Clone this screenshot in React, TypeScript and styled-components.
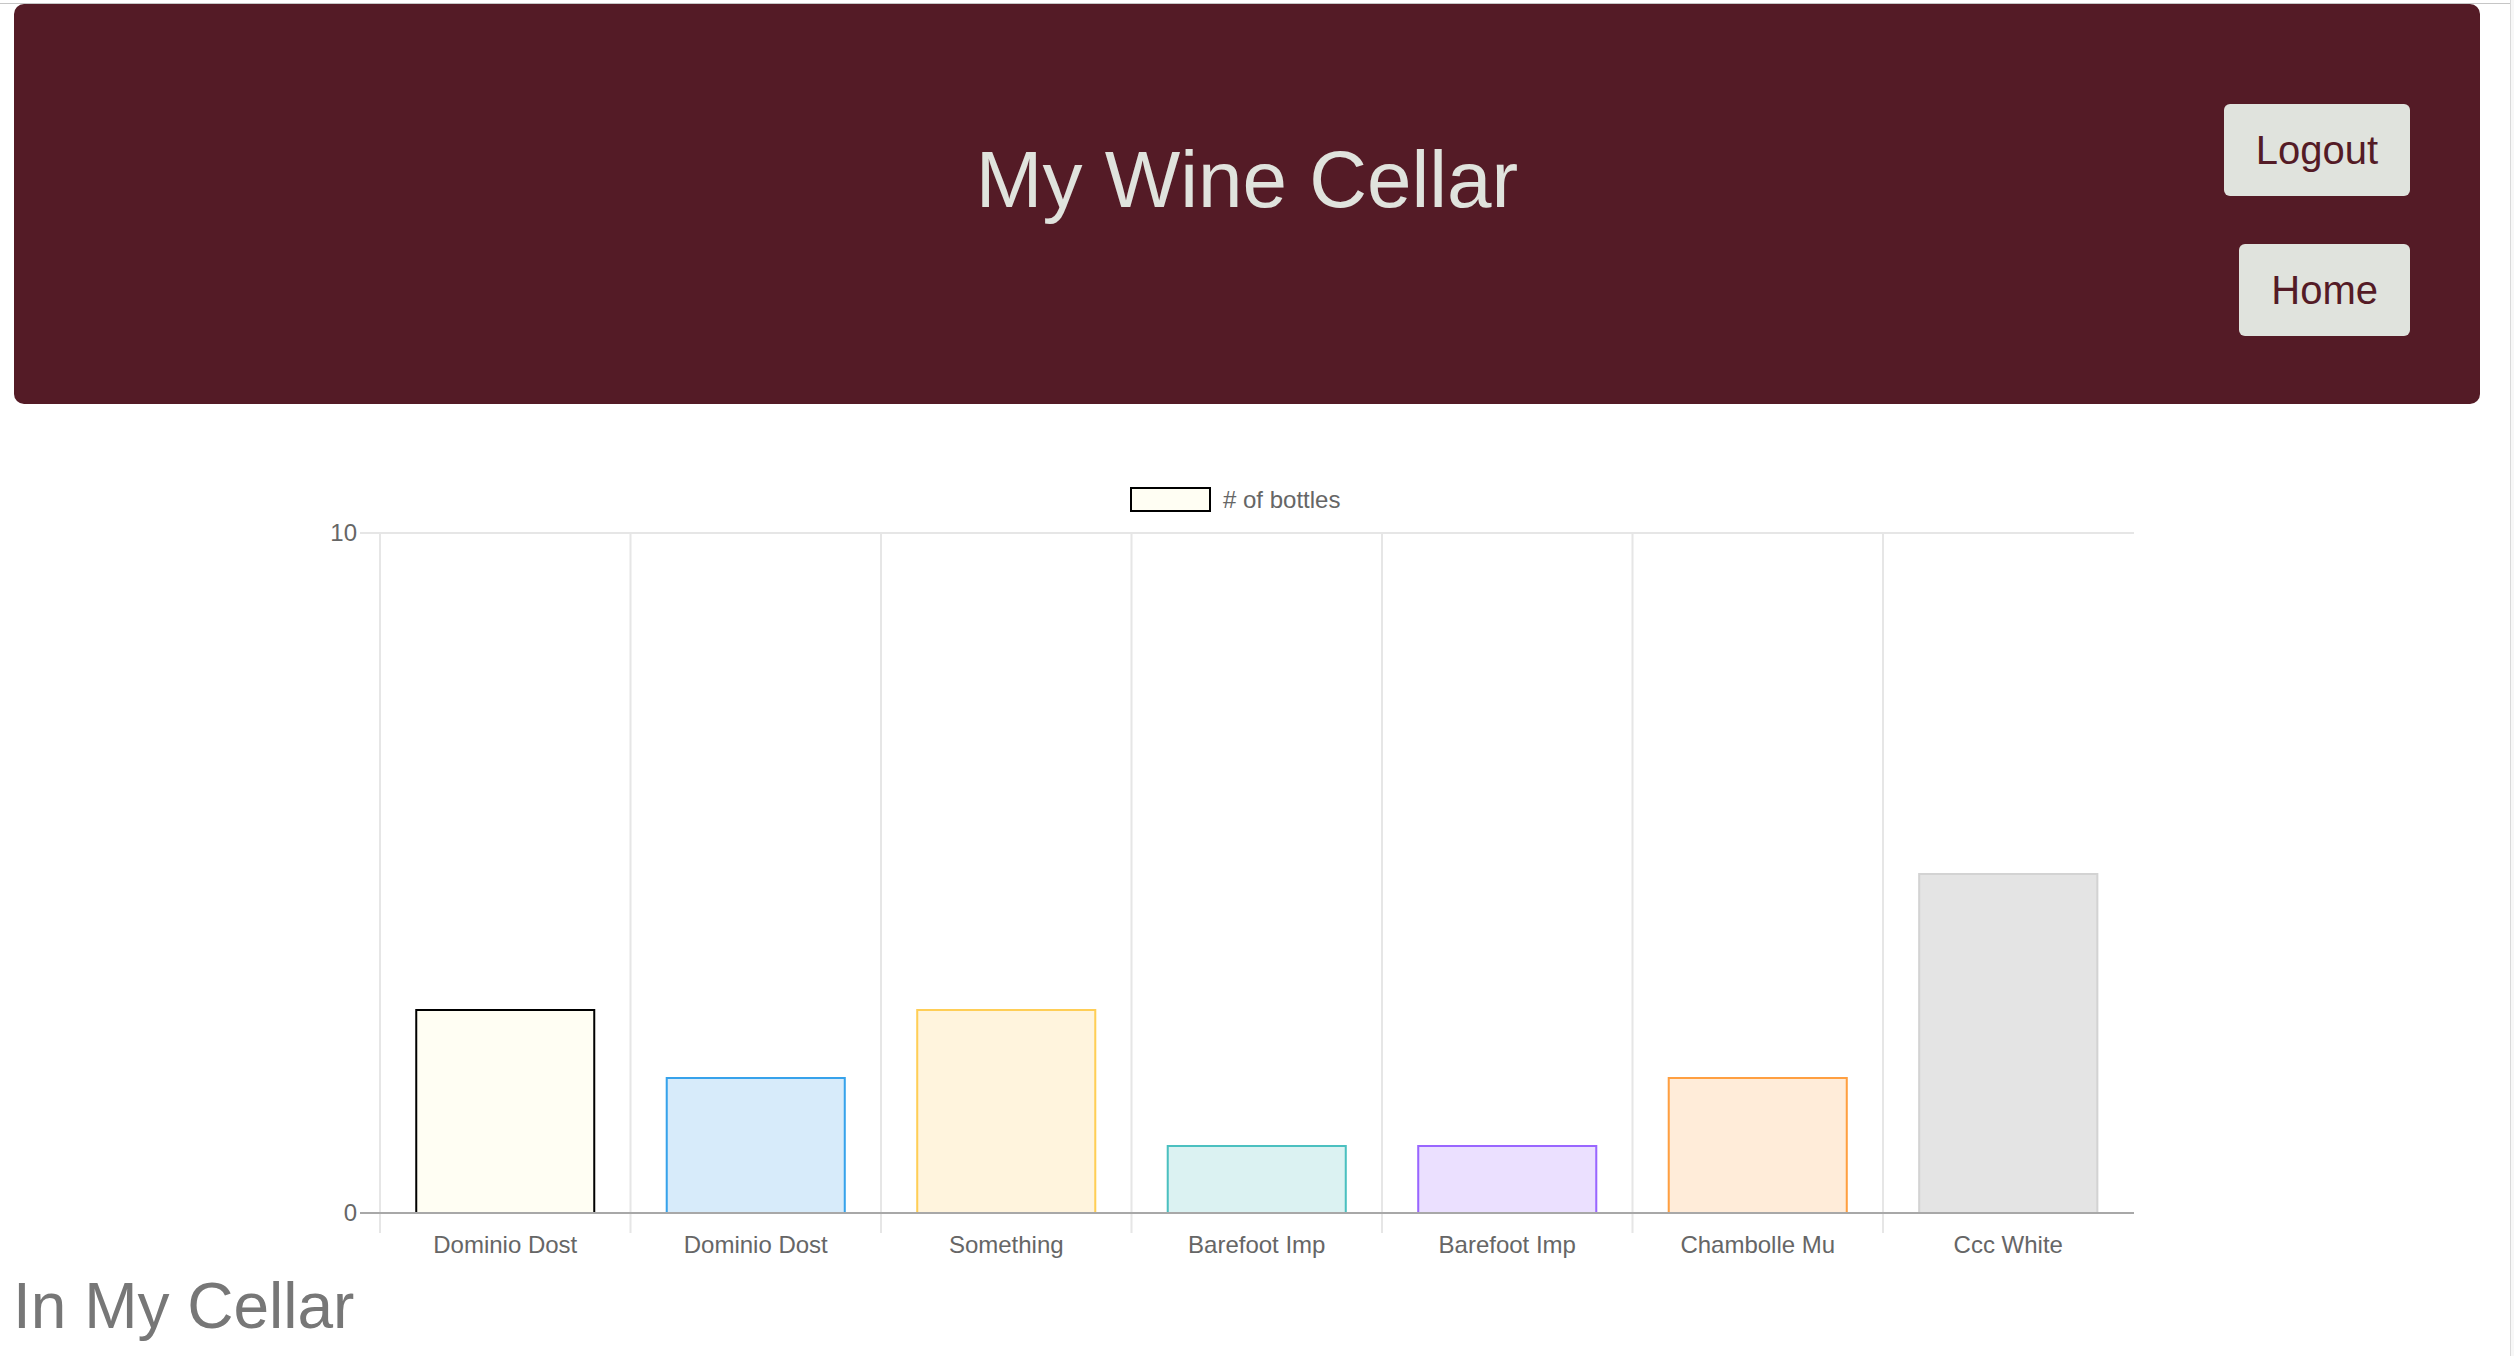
import React from 'react';
import { styled, createGlobalStyle } from 'styled-components';

type Bottle = {
  label: string;
  count: number;
  fill: string;
  stroke: string;
};

const GlobalStyle = createGlobalStyle`
  html, body {
    margin: 0;
    padding: 0;
    background: #fff;
    font-family: "Liberation Sans", Arial, Helvetica, sans-serif;
  }
`;

const Page = styled.div`
  display: flex;
  min-height: 100vh;
`;

const Main = styled.div`
  flex: 1;
  min-width: 0;
`;

const ScrollTrack = styled.div`
  width: 3px;
  border-left: 1px solid #dadada;
  background: #f7f7f7;
`;

const TopRule = styled.div`
  height: 3px;
  border-bottom: 1px solid #c6c6c6;
`;

const Header = styled.header`
  display: grid;
  grid-template-columns: 1fr auto 1fr;
  height: 400px;
  margin: 0 30px 0 14px;
  background: #541b26;
  border-radius: 10px;
`;

const Title = styled.h1`
  grid-column: 2;
  margin: 136px 0 0;
  font-size: 80px;
  line-height: 80px;
  font-weight: 400;
  color: #e0e3dd;
  white-space: nowrap;
`;

const NavButtons = styled.nav`
  grid-column: 3;
  display: flex;
  flex-direction: column;
  align-items: flex-end;
  gap: 48px;
  padding: 100px 70px 0 0;
`;

const NavButton = styled.button`
  height: 92px;
  padding: 0 32px;
  border: none;
  border-radius: 6px;
  background: #e0e3dd;
  color: #541b26;
  font-family: "Liberation Sans", Arial, Helvetica, sans-serif;
  font-size: 40px;
  cursor: pointer;
`;

const ChartBox = styled.section`
  margin-top: 36px;
`;

const ChartSvg = styled.svg`
  display: block;
  width: 2510px;
  height: 834px;
  font-family: "Liberation Sans", Arial, Helvetica, sans-serif;
`;

const SectionTitle = styled.h2`
  margin: 0 0 0 13px;
  font-size: 64px;
  line-height: 64px;
  font-weight: 400;
  color: #777;
`;

const bottles: Array<Bottle> = [
  { label: 'Dominio Dost', count: 3, fill: '#fffef3', stroke: '#000' },
  { label: 'Dominio Dost', count: 2, fill: '#d7ebfa', stroke: '#36a2eb' },
  { label: 'Something', count: 3, fill: '#fff4dd', stroke: '#ffce56' },
  { label: 'Barefoot Imp', count: 1, fill: '#dbf2f2', stroke: '#4bc0c0' },
  { label: 'Barefoot Imp', count: 1, fill: '#ebe0ff', stroke: '#9966ff' },
  { label: 'Chambolle Mu', count: 2, fill: '#ffecd9', stroke: '#ff9f40' },
  { label: 'Ccc White', count: 5, fill: '#e4e4e4', stroke: '#d3d3d3' },
];

// chart geometry, page coordinates (viewBox is shifted to match)
const left = 380;
const right = 2134;
const top = 533;
const zero = 1213;
const colWidth = 250.5;
const barWidth = 180;
const yMax = 10;

function BottleChart() {
  const unit = (zero - top) / yMax;

  return (
    <ChartSvg viewBox="0 440 2510 834">
      <rect x={1131} y={488} width={79} height={23} fill="#fffef3" stroke="#000" strokeWidth={2} />
      <text x={1223} y={508} fontSize={24} fill="#666">
        # of bottles
      </text>

      {bottles.map((_, i) => (
        <line key={i} x1={left + i * colWidth} x2={left + i * colWidth} y1={top} y2={zero + 20} stroke="#e6e6e6" strokeWidth={2} />
      ))}
      <line x1={left - 20} x2={right} y1={top} y2={top} stroke="#e6e6e6" strokeWidth={2} />

      <text x={357} y={541} fontSize={24} fill="#666" textAnchor="end">10</text>
      <text x={357} y={1221} fontSize={24} fill="#666" textAnchor="end">0</text>

      {bottles.map((b, i) => {
        const x = left + i * colWidth + (colWidth - barWidth) / 2;
        const y = zero - b.count * unit;
        return (
          <g key={i}>
            <rect x={x} y={y} width={barWidth} height={zero - y} fill={b.fill} />
            <path
              d={`M${x + 1} ${zero} V${y + 1} H${x + barWidth - 1} V${zero}`}
              fill="none"
              stroke={b.stroke}
              strokeWidth={2}
            />
            <text x={left + i * colWidth + colWidth / 2} y={1253} fontSize={24} fill="#666" textAnchor="middle">
              {b.label}
            </text>
          </g>
        );
      })}

      <line x1={left - 20} x2={right} y1={zero} y2={zero} stroke="#a8a8a8" strokeWidth={2} />
    </ChartSvg>
  );
}

function App() {
  return (
    <Page>
      <GlobalStyle />
      <Main>
        <TopRule />
        <Header>
          <Title>My Wine Cellar</Title>
          <NavButtons>
            <NavButton>Logout</NavButton>
            <NavButton>Home</NavButton>
          </NavButtons>
        </Header>
        <ChartBox>
          <BottleChart />
        </ChartBox>
        <SectionTitle>In My Cellar</SectionTitle>
      </Main>
      <ScrollTrack />
    </Page>
  );
}

export default App;
